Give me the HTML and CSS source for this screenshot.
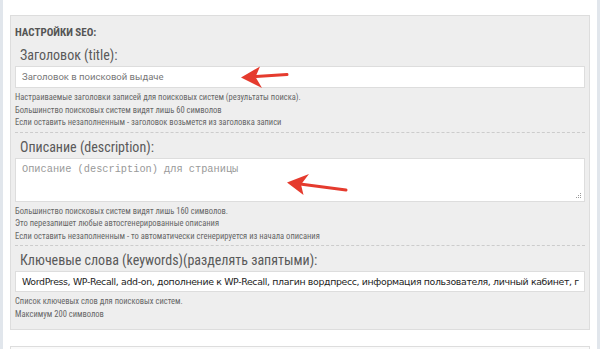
FILE: index.html
```html
<!DOCTYPE html>
<html lang="ru">
<head>
    <meta charset="UTF-8">
    <meta name="viewport" content="width=device-width, initial-scale=1.0">
    <title>Настройки SEO</title>
    <link rel="stylesheet" href="styles.css">
</head>
<body>
    <div class="page">
        <div class="seo-box">
            <h3 class="seo-title">НАСТРОЙКИ SEO:</h3>

            <div class="field">
                <label class="field-label">Заголовок (title):</label>
                <div class="text-input placeholder">Заголовок в поисковой выдаче</div>
                <div class="notes">
                    <div>Настраиваемые заголовки записей для поисковых систем (результаты поиска).</div>
                    <div>Большинство поисковых систем видят лишь 60 символов</div>
                    <div>Если оставить незаполненным - заголовок возьмется из заголовка записи</div>
                </div>
            </div>

            <div class="field">
                <label class="field-label">Описание (description):</label>
                <div class="text-area">
                    <span class="mono-placeholder">Описание (description) для страницы</span>
                    <svg class="grip" width="6" height="6" viewBox="0 0 6 6">
                        <rect x="4" y="0" width="1" height="1" fill="#999"/>
                        <rect x="2" y="2" width="1" height="1" fill="#999"/>
                        <rect x="4" y="2" width="1" height="1" fill="#999"/>
                        <rect x="0" y="4" width="1" height="1" fill="#999"/>
                        <rect x="2" y="4" width="1" height="1" fill="#999"/>
                        <rect x="4" y="4" width="1" height="1" fill="#999"/>
                    </svg>
                </div>
                <div class="notes">
                    <div>Большинство поисковых систем видят лишь 160 символов.</div>
                    <div>Это перезапишет любые автосгенерированные описания</div>
                    <div>Если оставить незаполненным - то автоматически сгенерируется из начала описания</div>
                </div>
            </div>

            <div class="field last">
                <label class="field-label">Ключевые слова (keywords)(разделять запятыми):</label>
                <div class="text-input value">WordPress, WP-Recall, add-on, дополнение к WP-Recall, плагин вордпресс, информация пользователя, личный кабинет, г</div>
                <div class="notes">
                    <div>Список ключевых слов для поисковых систем.</div>
                    <div>Максимум 200 символов</div>
                </div>
            </div>
        </div>

        <div class="next-box"></div>
    </div>

    <svg class="arrows" width="600" height="349" viewBox="0 0 600 349">
        <path d="M287 74.5 L256 76.5" stroke="#e53b2e" stroke-width="3" stroke-linecap="round" fill="none"/>
        <path d="M241 77.5 L260 66.5 L255.5 77 L262 88 Z" fill="#e53b2e"/>
        <path d="M346 190 L300 184" stroke="#e53b2e" stroke-width="3" stroke-linecap="round" fill="none"/>
        <path d="M287 182.5 L309 174 L301 184.5 L303.5 195 Z" fill="#e53b2e"/>
    </svg>
</body>
</html>
```
FILE: styles.css
```css
body {
    margin: 0;
    background-color: #fff;
    font-family: "Roboto Condensed", "Liberation Sans Narrow", Roboto, sans-serif;
    color: #555;
}
.page {
    width: 600px;
    height: 349px;
    box-sizing: border-box;
    border-left: 3px solid #e1e6ec;
    border-right: 3px solid #e1e6ec;
    padding: 15px 7px 0 7px;
    overflow: hidden;
}
.seo-box {
    background-color: #eee;
    border: 1px solid #ddd;
    padding: 0 4px;
}
.seo-title {
    margin: 0;
    padding-top: 9px;
    font-size: 11px;
    line-height: 16px;
    font-weight: bold;
    color: #555;
}
.field {
    padding: 4px 0 3px 0;
    border-bottom: 1px dashed #ccc;
}
.field.last {
    border-bottom: none;
    padding-bottom: 9px;
}
.field-label {
    display: block;
    padding-left: 5px;
    margin-bottom: 1px;
    font-size: 14px;
    line-height: 20px;
    color: #5a5a5a;
}
.text-input {
    height: 22px;
    box-sizing: border-box;
    background-color: #fff;
    border: 1px solid #ddd;
    padding: 0 6px;
    white-space: nowrap;
    overflow: hidden;
}
.placeholder {
    font-family: Roboto, sans-serif;
    font-size: 9.5px;
    line-height: 20px;
    color: #777;
}
.value {
    height: 21px;
    font-family: "DejaVu Sans", Verdana, sans-serif;
    font-size: 9.4px;
    letter-spacing: -0.35px;
    line-height: 19px;
    color: #222;
}
.text-area {
    position: relative;
    height: 44px;
    box-sizing: border-box;
    background-color: #fff;
    border: 1px solid #ddd;
    padding: 3px 6px;
    line-height: 14px;
    font-size: 10px;
}
.mono-placeholder {
    font-family: "Liberation Mono", "Courier New", monospace;
    font-size: 10.3px;
    line-height: 14px;
    color: #999;
}
.grip {
    position: absolute;
    right: 2px;
    bottom: 2px;
}
.notes {
    margin-top: 3px;
    font-size: 8.5px;
    line-height: 12.5px;
    color: #666;
}
.next-box {
    margin-top: 16px;
    height: 30px;
    background-color: #fafafa;
    border: 1px solid #ddd;
}
.arrows {
    position: absolute;
    top: 0;
    left: 0;
}
```
